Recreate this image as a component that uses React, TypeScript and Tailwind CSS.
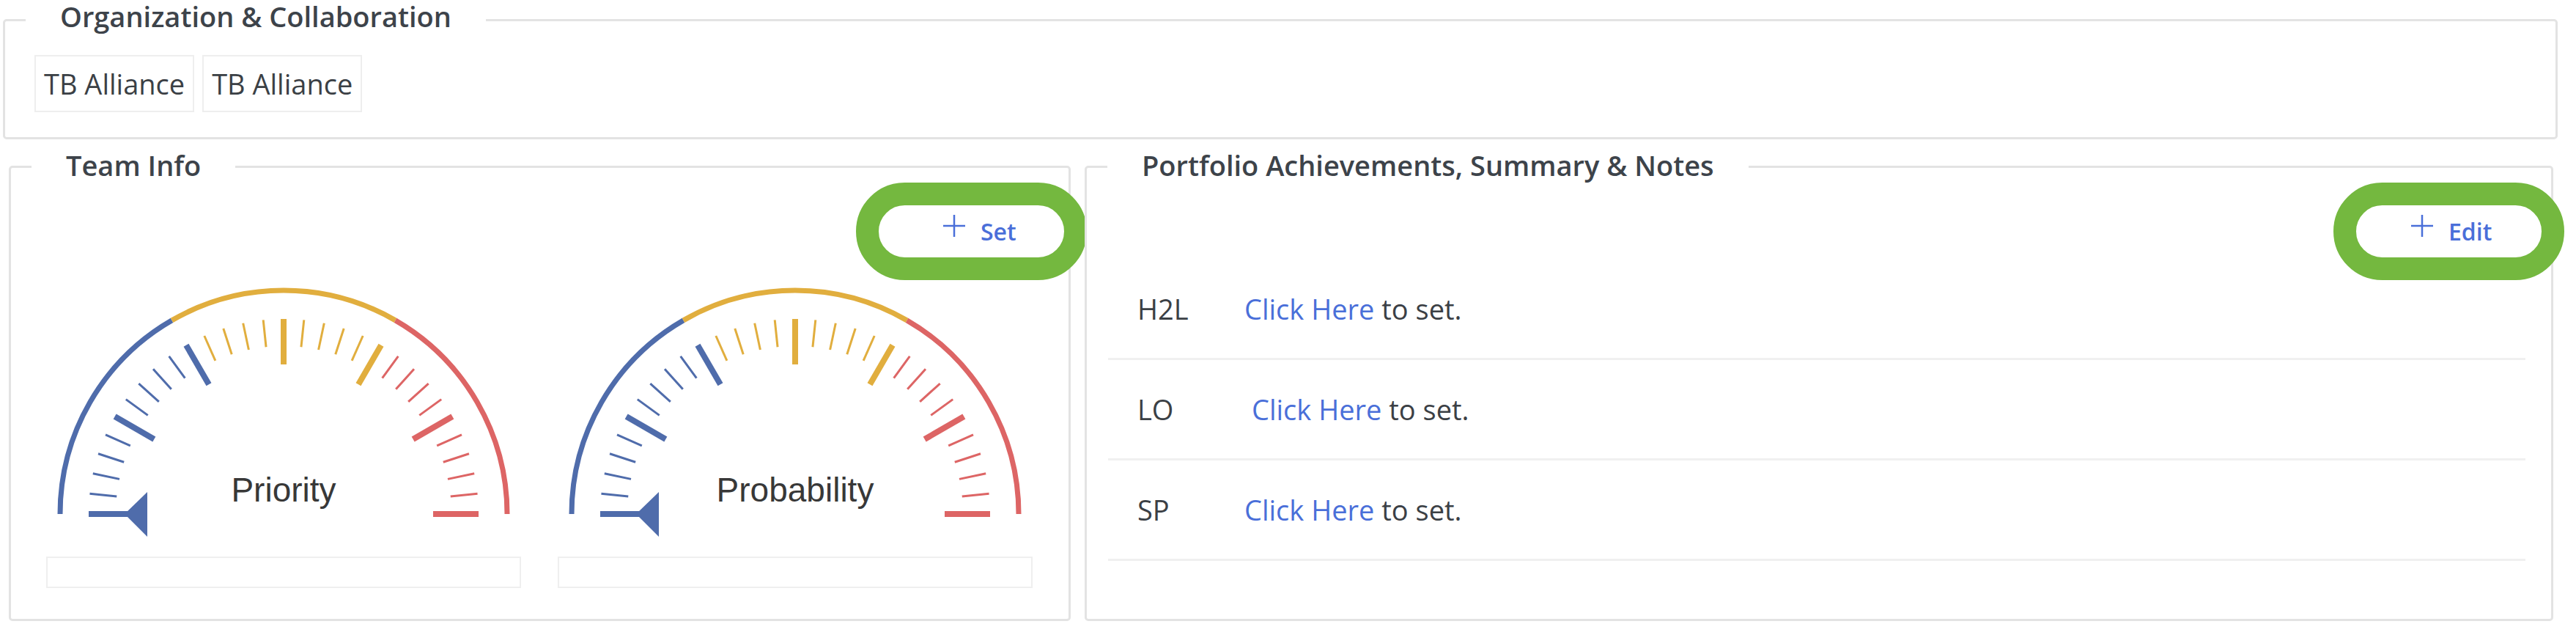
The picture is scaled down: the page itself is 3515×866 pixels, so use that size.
import type { ReactNode } from "react";

const BLUE = "#4f6cab";
const YELLOW = "#e1ae3e";
const RED = "#dd6565";
const LINK = "#4a6fd9";

function Legend({ children, top = false }: { children: ReactNode; top?: boolean }) {
  return (
    <legend
      className={
        top
          ? "ml-[28px] px-[47px] pb-[10px] text-[38px] font-semibold leading-[44px] text-[#3d434a]"
          : "ml-[28px] px-[47px] pb-[5px] text-[38px] font-semibold leading-[50px] text-[#3d434a]"
      }
    >
      {children}
    </legend>
  );
}

function ActionButton({ label, pad }: { label: string; pad: string }) {
  return (
    <button
      type="button"
      className={`flex h-[71px] w-[253px] items-center gap-[20px] rounded-full bg-white outline-[31px] outline-solid outline-[#74b83f] text-[32px] font-semibold text-[#4a6fd9] ${pad}`}
    >
      <svg width="32" height="32" viewBox="0 0 32 32" className="mb-[16px] shrink-0">
        <path d="M16 1v30M1 16h30" stroke={LINK} strokeWidth="2.5" fill="none" />
      </svg>
      <span>{label}</span>
    </button>
  );
}

function Gauge({ label }: { label: string }) {
  const cx = 324;
  const cy = 317;
  const polar = (r: number, deg: number) => {
    const a = (deg * Math.PI) / 180;
    return [cx + r * Math.cos(a), cy - r * Math.sin(a)];
  };
  const arc = (a0: number, a1: number, r: number) => {
    const [x0, y0] = polar(r, a0);
    const [x1, y1] = polar(r, a1);
    return `M${x0} ${y0} A${r} ${r} 0 0 1 ${x1} ${y1}`;
  };

  const ticks = Array.from({ length: 31 }, (_, i) => {
    const value = i * 6;
    const deg = 180 - value;
    const major = i % 5 === 0;
    const color = value <= 60 ? BLUE : value <= 120 ? YELLOW : RED;
    const [x0, y0] = polar(major ? 204 : 229, deg);
    const [x1, y1] = polar(266, deg);
    return (
      <line
        key={i}
        x1={x0}
        y1={y0}
        x2={x1}
        y2={y1}
        stroke={color}
        strokeWidth={major ? 8 : 3}
      />
    );
  });

  return (
    <svg viewBox="0 0 648 355" className="h-[355px] w-full">
      <path d={arc(180, 120, 305)} stroke={BLUE} strokeWidth="7" fill="none" />
      <path d={arc(120, 60, 305)} stroke={YELLOW} strokeWidth="7" fill="none" />
      <path d={arc(60, 0, 305)} stroke={RED} strokeWidth="7" fill="none" />
      {ticks}
      <polygon points="107,317 138,287 138,348" fill={BLUE} />
      <text
        x={cx}
        y={300}
        textAnchor="middle"
        fontFamily="'Liberation Sans', Arial, sans-serif"
        fontSize="46"
        fill="#383838"
      >
        {label}
      </text>
    </svg>
  );
}

function NoteRow({ label, indent = "" }: { label: string; indent?: string }) {
  return (
    <div className="flex h-[137px] items-center border-b-[3px] border-[#f0f0f0] pl-[40px] text-[38px] text-[#3b4045]">
      <span className="w-[146px] shrink-0">{label}</span>
      <span className={indent}>
        <a className="text-[#4a6fd9]">Click Here</a> to set.
      </span>
    </div>
  );
}

export default function App() {
  return (
    <div className="w-[3515px] bg-white pl-[4px] pr-[25px] font-['Open_Sans',sans-serif]">
      <fieldset className="min-w-0 rounded-[5px] border-[3px] border-[#e3e3e3]">
        <Legend top>Organization &amp; Collaboration</Legend>
        <div className="flex gap-[11px] pb-[34px] pl-[40px] pt-[21px]">
          {["TB Alliance", "TB Alliance"].map((org, i) => (
            <div
              key={i}
              className="flex h-[78px] items-center border-2 border-[#eeeeee] px-[11px] text-[38px] text-[#3b4045]"
            >
              {org}
            </div>
          ))}
        </div>
      </fieldset>

      <div className="ml-[8px] mr-[6px] mt-[10px] flex gap-[19px]">
        <fieldset className="w-[1449px] min-w-0 shrink-0 rounded-[5px] border-[3px] border-[#e3e3e3]">
          <Legend>Team Info</Legend>
          <div className="flex justify-end pr-[6px] pt-[25px]">
            <ActionButton label="Set" pad="pl-[87px]" />
          </div>
          <div className="grid grid-cols-2 gap-[50px] pb-[42px] pl-[48px] pr-[49px] pt-[33px]">
            {["Priority", "Probability"].map((g) => (
              <div key={g}>
                <Gauge label={g} />
                <div className="mt-[20px] h-[43px] border-2 border-[#efefef]" />
              </div>
            ))}
          </div>
        </fieldset>

        <fieldset className="min-w-0 flex-1 rounded-[5px] border-[3px] border-[#e3e3e3]">
          <Legend>Portfolio Achievements, Summary &amp; Notes</Legend>
          <div className="flex justify-end pr-[13px] pt-[25px]">
            <ActionButton label="Edit" pad="pl-[74px]" />
          </div>
          <div className="ml-[29px] mr-[35px] mt-[3px] pb-[76px]">
            <NoteRow label="H2L" />
            <NoteRow label="LO" indent="pl-[10px]" />
            <NoteRow label="SP" />
          </div>
        </fieldset>
      </div>
    </div>
  );
}
